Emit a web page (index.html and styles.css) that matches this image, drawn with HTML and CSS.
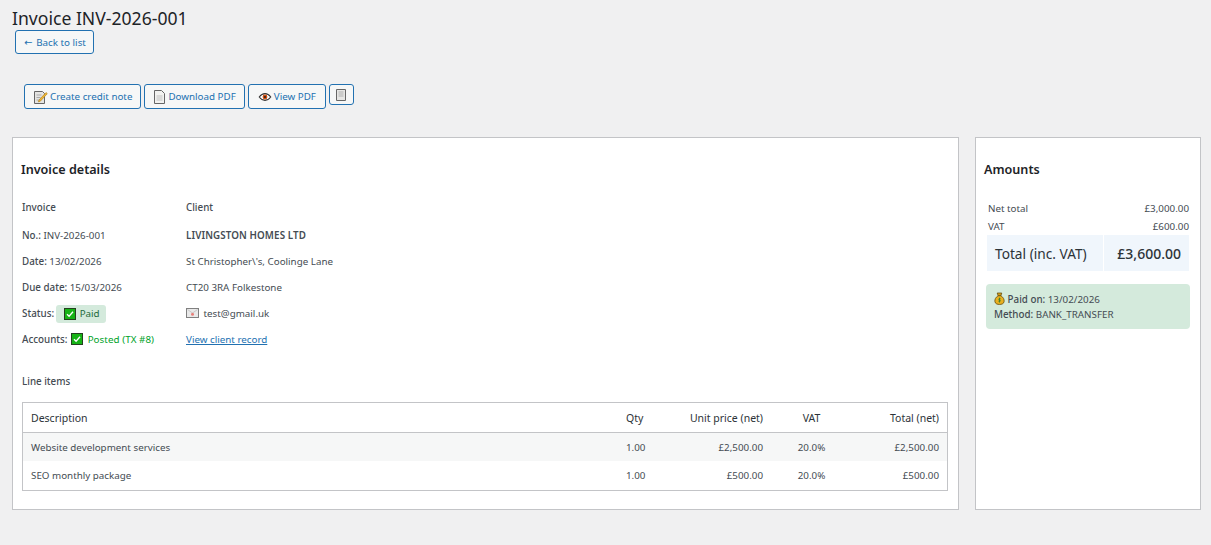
FILE: index.html
```html
<!DOCTYPE html>
<html lang="en">
<head>
<meta charset="UTF-8">
<meta name="viewport" content="width=device-width, initial-scale=1.0">
<title>Invoice INV-2026-001</title>
<link rel="stylesheet" href="styles.css">
</head>
<body>
<div class="wrap">
    <h1>Invoice INV-2026-001</h1>
    <a class="button back-link" href="#"><span class="arrow">←</span> Back to list</a>

    <div class="actions">
        <a class="button" href="#">
            <svg class="icon" viewBox="0 0 16 16"><path d="M1.500 2.500h8l2 2v10h-10z" fill="#e4e4e2" stroke="#666"/><path d="M3.500 6h5M3.500 8.500h4M3.500 11h3" stroke="#aaa"/><path d="M6 11l7-7.500 1.300 1.200-7 7.500-2 .6z" fill="#f2b632" stroke="#a87a10" stroke-width=".6"/></svg>
            Create credit note
        </a>
        <a class="button button-download" href="#">
            <svg class="icon" viewBox="0 0 16 16"><path d="M2.500 1.500h7l3 3v10h-10z" fill="#f2f2f0" stroke="#666"/><path d="M4.500 7h6M4.500 9h6M4.500 11h6" stroke="#c0c0c0"/></svg>
            Download PDF
        </a>
        <a class="button button-view" href="#">
            <svg class="icon" viewBox="-1 -1 18 18"><path d="M1.500 8c2-2.700 4.200-3.800 6.500-3.800s4.500 1.100 6.500 3.800c-2 2.700-4.200 3.800-6.500 3.800S3.500 10.700 1.500 8z" fill="#fff" stroke="#333" stroke-width="1.200"/><circle cx="8" cy="8" r="2.700" fill="#d4500f"/><circle cx="8" cy="8" r="1.200" fill="#222"/></svg>
            View PDF
        </a>
        <a class="button button-small" href="#">
            <svg class="icon" viewBox="0 0 16 16"><path d="M3.500 2.500h9v11h-9z" fill="#e6e6e4" stroke="#666"/><path d="M5.500 5h5M5.500 7h5M5.500 9h5" stroke="#b0b0b0"/></svg>
        </a>
    </div>

    <div class="columns">
        <div class="card card-main">
            <h2>Invoice details</h2>
            <div class="info">
                <div class="info-col info-invoice">
                    <p class="info-title">Invoice</p>
                    <p><strong>No.:</strong> INV-2026-001</p>
                    <p><strong>Date:</strong> 13/02/2026</p>
                    <p><strong>Due date:</strong> 15/03/2026</p>
                    <p><strong>Status:</strong>
                        <span class="badge">
                            <svg class="tick" viewBox="0 0 12 12"><rect x=".5" y=".5" width="11" height="11" fill="#16b316" stroke="#24401f"/><path d="M3 6.200l2.100 2L9 3.800" fill="none" stroke="#fff" stroke-width="1.300"/></svg>
                            Paid
                        </span>
                    </p>
                    <p><strong>Accounts:</strong>
                        <svg class="tick tick-accounts" viewBox="0 0 12 12"><rect x=".5" y=".5" width="11" height="11" fill="#16b316" stroke="#24401f"/><path d="M3 6.200l2.100 2L9 3.800" fill="none" stroke="#fff" stroke-width="1.300"/></svg>
                        <span class="posted">Posted (TX #8)</span>
                    </p>
                </div>
                <div class="info-col">
                    <p class="info-title">Client</p>
                    <p><strong class="client-name">LIVINGSTON HOMES LTD</strong></p>
                    <p>St Christopher\'s, Coolinge Lane</p>
                    <p>CT20 3RA Folkestone</p>
                    <p>
                        <svg class="mail" viewBox="0 0 13 10"><rect x=".5" y=".5" width="12" height="9" fill="#e9e9e9" stroke="#808080"/><path d="M1.500 1.500l5 3.500 5-3.500" fill="none" stroke="#c8c8c8"/><circle cx="6.500" cy="6.300" r="1.500" fill="#e8807a"/></svg>
                        test@gmail.uk
                    </p>
                    <p><a class="link" href="#">View client record</a></p>
                </div>
            </div>

            <h3>Line items</h3>
            <table class="items">
                <thead>
                    <tr>
                        <th class="left">Description</th>
                        <th class="col-qty">Qty</th>
                        <th class="col-price">Unit price (net)</th>
                        <th class="col-vat">VAT</th>
                        <th class="col-total">Total (net)</th>
                    </tr>
                </thead>
                <tbody>
                    <tr class="alt">
                        <td class="left">Website development services</td>
                        <td class="col-qty">1.00</td>
                        <td class="col-price">£2,500.00</td>
                        <td class="col-vat">20.0%</td>
                        <td class="col-total">£2,500.00</td>
                    </tr>
                    <tr>
                        <td class="left">SEO monthly package</td>
                        <td class="col-qty">1.00</td>
                        <td class="col-price">£500.00</td>
                        <td class="col-vat">20.0%</td>
                        <td class="col-total">£500.00</td>
                    </tr>
                </tbody>
            </table>
        </div>

        <div class="card card-side">
            <h2>Amounts</h2>
            <table class="amounts">
                <tr><td>Net total</td><td class="num">£3,000.00</td></tr>
                <tr><td>VAT</td><td class="num">£600.00</td></tr>
                <tr class="grand"><td>Total (inc. VAT)</td><td class="num">£3,600.00</td></tr>
            </table>
            <div class="paid-box">
                <p>
                    <svg class="bag" viewBox="0 0 12 14"><path d="M3.500 1h5L7.500 4h-3z" fill="#d9a21b" stroke="#5c430a" stroke-width=".8"/><path d="M4.500 4h3C10 5.500 11.500 8 11 10.500 10.500 13 8 13.500 6 13.500S1.500 13 1 10.500C.5 8 2 5.500 4.500 4z" fill="#e8b020" stroke="#5c430a" stroke-width=".8"/><path d="M6 6v5.500M7.300 7.300H5.400v1.400h1.300V10H4.800" fill="none" stroke="#2f7d2f" stroke-width=".8"/></svg>
                    <strong>Paid on:</strong> 13/02/2026
                </p>
                <p><strong>Method:</strong> BANK_TRANSFER</p>
            </div>
        </div>
    </div>
</div>
</body>
</html>
```

FILE: styles.css
```css
* { box-sizing: border-box; }
html, body { margin: 0; padding: 0; }
body {
    background: #f0f0f1;
    color: #454c53;
    font-family: "Noto Sans", "Open Sans", sans-serif;
    font-size: 9.8px;
}
.wrap { padding: 6px 10px 0 12px; }
h1 {
    margin: 0;
    color: #1d2327;
    font-size: 17.6px;
    font-weight: 400;
    line-height: 24px;
}
p { margin: 0; }
strong { font-weight: 500; }

/* buttons */
.button {
    display: inline-flex;
    align-items: center;
    gap: 1px;
    height: 25px;
    padding: 0 8px;
    background: #f6f7f7;
    border: 1px solid #2271b1;
    border-radius: 3px;
    color: #2271b1;
    text-decoration: none;
    white-space: nowrap;
}
.back-link { width: 79px; height: 24px; margin-left: 3px; }
.arrow { margin-right: 3px; font-family: "DejaVu Sans", sans-serif; }
.actions {
    display: flex;
    align-items: flex-start;
    gap: 3px;
    padding: 30px 0 28px 12px;
}
.button-download { padding-left: 7px; gap: 0; }
.button-view { padding-right: 9px; }
.button-small { width: 25px; height: 21px; padding: 0; justify-content: center; }
.icon { width: 16px; height: 16px; flex: none; }

/* cards */
.columns { display: flex; gap: 16px; }
.card {
    background: #fff;
    border: 1px solid #c3c4c7;
    height: 373px;
}
.card-main { width: 947px; padding: 0 10px 0 8px; }
.card-side { width: 226px; padding: 0 10px; }
h2 {
    margin: 23px 0 0;
    color: #1d2327;
    font-size: 12.6px;
    font-weight: 600;
    line-height: 18px;
}
.card-side h2 { margin-left: -2px; }

/* invoice details */
.info { display: flex; margin: 16px 0 0 1px; }
.info-col p { height: 26px; line-height: 26px; white-space: nowrap; }
.info-col .info-title { height: 28px; font-weight: 500; }
.info-invoice { width: 164px; }
.client-name { font-weight: 600; letter-spacing: 0.1px; }
.badge {
    display: inline-flex;
    align-items: center;
    gap: 4px;
    height: 18px;
    margin-left: -1px;
    padding: 0 6px 0 8px;
    background: #d4eadc;
    border-radius: 3px;
    color: #1e6b3c;
    line-height: 18px;
    vertical-align: middle;
}
.tick { width: 12px; height: 12px; vertical-align: -2px; }
.tick-accounts { margin: 0 1px; }
.posted { margin-left: 1px; color: #00a32a; letter-spacing: 0.05px; }
.mail { width: 13px; height: 10px; margin-right: 2px; vertical-align: -1px; }
.link { color: #2271b1; }

/* line items */
h3 {
    margin: 16px 0 0 1px;
    font-size: 9.8px;
    font-weight: 500;
    line-height: 26px;
}
.items {
    width: 926px;
    margin: 7px 0 0 1px;
    border: 1px solid #c3c4c7;
    border-spacing: 0;
    table-layout: fixed;
}
.items th {
    height: 30px;
    padding: 0 8px;
    border-bottom: 1px solid #c3c4c7;
    color: #2c3338;
    font-size: 10.5px;
    font-weight: 400;
    text-align: right;
}
.items td {
    height: 29px;
    padding: 0 8px;
    text-align: right;
}
.items .left { text-align: left; }
.items .alt td { height: 28px; background: #f6f7f7; }
.items .col-qty { width: 35px; padding-right: 0; text-align: left; }
.items .col-price { width: 118px; }
.items .col-vat { width: 81px; text-align: center; }
.items .col-total { width: 95px; }

/* amounts */
.amounts {
    width: 202px;
    margin: 20px 0 0 1px;
    border-spacing: 0;
}
.amounts td { height: 18px; padding: 0 0 0 1px; }
.amounts .num { text-align: right; }
.amounts .grand td {
    height: 36px;
    padding: 0 8px;
    background: #f0f6fc;
    border-right: 1px solid #fff;
    color: #2c3338;
    font-size: 13.700px;
}
.amounts .grand .num { font-size: 14px; font-weight: 500; border-right: 0; }
.paid-box {
    width: 204px;
    height: 45px;
    margin-top: 13px;
    padding: 8px;
    background: #d4eadc;
    border-radius: 4px;
    line-height: 15px;
}
.bag { width: 11px; height: 13px; vertical-align: -2px; }
```
